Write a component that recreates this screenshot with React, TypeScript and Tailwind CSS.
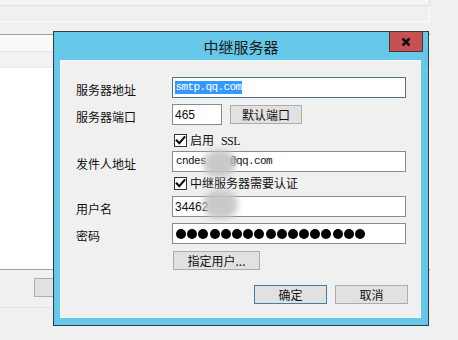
import React from "react";

function Check() {
  return (
    <div className="w-[13px] h-[13px] border border-[#333333] bg-white flex items-center justify-center">
      <svg width="11" height="11" viewBox="0 0 11 11">
        <path d="M1.8 5.6 L4.3 8.2 L9.4 2.2" fill="none" stroke="#111" strokeWidth="2.2" strokeLinecap="square" />
      </svg>
    </div>
  );
}

function Btn({ children, w, def }: { children: React.ReactNode; w: string; def?: boolean }) {
  return (
    <div
      className={`${w} h-[19px] flex items-center justify-center bg-[#e1e1e1] border ${
        def ? "border-[#3c7fb1]" : "border-[#adadad]"
      } text-[12px] text-[#111] leading-none`}
    >
      {children}
    </div>
  );
}

export default function App() {
  return (
    <div className="relative w-[458px] h-[340px] bg-[#f0f0f0] overflow-hidden font-['Noto_Sans_CJK_SC','Liberation_Sans',sans-serif]">
      {/* background window */}
      <div className="flex flex-col w-[430px]">
        <div className="h-[6px] bg-[#f5f5f5] border-b border-r border-[#e0e0e0]" />
        <div className="h-[16px] border-b border-r border-[#fbfbfb]" />
        <div className="h-[12px]" />
        <div className="h-[18px] bg-[#f9f9f9] border-t border-[#a0a0a0] border-b border-b-[#e6e6e6]" />
        <div className="h-[16px] bg-[#f2f2f2] border-b border-[#ebebeb]" />
        <div className="h-[202px] bg-white border-b border-[#a0a0a0]" />
        <div className="h-[38px] flex items-start pt-[8px] pl-[34px] border-b border-[#e2e2e2]">
          <div className="w-[40px] h-[19px] bg-[#e1e1e1] border border-[#adadad]" />
        </div>
      </div>

      {/* dialog */}
      <div className="absolute left-[53px] top-[31px] w-[376px] h-[295px] border border-[#2d3d48] bg-[#66c8e8] flex flex-col">
        <div className="relative h-[28px] flex items-center justify-center">
          <span className="text-[15px] text-[#1a1a1a] leading-none pt-[1px]">中继服务器</span>
          <div className="absolute right-[5px] top-0 w-[34px] h-[20px] bg-[#c75050] border border-[#4a3434] border-t-0 flex items-center justify-center">
            <svg width="10" height="10" viewBox="0 0 10 10">
              <path d="M1.5 1.5 L8.5 8.5 M8.5 1.5 L1.5 8.5" stroke="#111" strokeWidth="2.6" />
            </svg>
          </div>
        </div>
        <div className="ml-[6px] w-[361px] h-[258px] bg-[#f0f0f0] border border-[#f8f8f8] relative text-[12px] text-[#111]">
          <div className="flex flex-col pl-[15px] pt-[16px]">
            {/* row 1 */}
            <div className="flex items-center h-[21px]">
              <div className="w-[96px] pt-[4px]">服务器地址</div>
              <div className="w-[234px] h-[21px] bg-white border border-[#56718a] flex items-center pl-[2px]">
                <span className="bg-[#3399ff] text-white h-[13px] flex items-center font-['Liberation_Mono',monospace] text-[11px] tracking-[-0.6px] leading-none px-[0.5px]">
                  smtp.qq.com
                </span>
              </div>
            </div>
            {/* row 2 */}
            <div className="flex items-center h-[21px] mt-[6px]">
              <div className="w-[96px] pt-[4px]">服务器端口</div>
              <div className="w-[50px] h-[21px] bg-white border border-[#8a8a8a] flex items-center pl-[2px] font-['Liberation_Sans',sans-serif] text-[12px]">
                465
              </div>
              <div className="ml-[8px]">
                <Btn w="w-[72px]">默认端口</Btn>
              </div>
            </div>
            {/* checkbox 1 */}
            <div className="flex items-center h-[18px] mt-[6px] pl-[98px] gap-[3px]">
              <Check />
              <span>启用</span>
              <span className="font-['Liberation_Serif',serif] text-[12px] tracking-[-0.6px] ml-[4px] pt-[1px]">SSL</span>
            </div>
            {/* row 3 */}
            <div className="flex items-center h-[21px] mt-[2px]">
              <div className="w-[96px] pt-[4px]">发件人地址</div>
              <div className="w-[234px] h-[21px] bg-white border border-[#8a8a8a] flex items-center pl-[3px] font-['Liberation_Mono',monospace] text-[11px] tracking-[-0.6px]">
                <span>cndes</span>
                <span className="w-[24px] shrink-0" />
                <span>@qq.com</span>
              </div>
            </div>
            {/* checkbox 2 */}
            <div className="flex items-center h-[18px] mt-[2px] pl-[98px] gap-[3px]">
              <Check />
              <span>中继服务器需要认证</span>
            </div>
            {/* row 4 */}
            <div className="flex items-center h-[21px] mt-[4px]">
              <div className="w-[96px] pt-[4px]">用户名</div>
              <div className="w-[234px] h-[21px] bg-white border border-[#8a8a8a] flex items-center pl-[2px] font-['Liberation_Sans',sans-serif] text-[12px]">
                34462
              </div>
            </div>
            {/* row 5 */}
            <div className="flex items-center h-[21px] mt-[6px]">
              <div className="w-[96px] pt-[4px]">密码</div>
              <div className="w-[234px] h-[21px] bg-white border border-[#8a8a8a] flex items-center pl-[3px] gap-[1.2px]">
                {Array.from({ length: 17 }).map((_, i) => (
                  <span key={i} className="w-[10px] h-[10px] rounded-full bg-black" />
                ))}
              </div>
            </div>
            {/* assign user */}
            <div className="flex mt-[7px] pl-[97px]">
              <Btn w="w-[87px]">指定用户...</Btn>
            </div>
            {/* ok cancel */}
            <div className="flex mt-[15px] pl-[178px] gap-[8px]">
              <Btn w="w-[73px]" def>
                确定
              </Btn>
              <Btn w="w-[73px]">取消</Btn>
            </div>
          </div>
          {/* privacy blurs */}
          <div className="absolute left-[142px] top-[89px] w-[33px] h-[27px] rounded-full bg-[#c4c4c4] blur-[3px] opacity-90" />
          <div className="absolute left-[142px] top-[129px] w-[35px] h-[29px] rounded-full bg-[#c4c4c4] blur-[3px] opacity-90" />
        </div>
      </div>
    </div>
  );
}
